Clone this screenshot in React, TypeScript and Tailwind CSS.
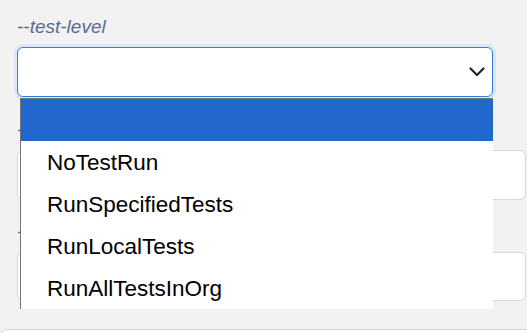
import React from 'react'

const options = ['', 'NoTestRun', 'RunSpecifiedTests', 'RunLocalTests', 'RunAllTestsInOrg']

/**
 * Campo select aberto com a lista de opções por cima dos outros campos
 */
const Chevron: React.FC = () => (
  <svg width="16" height="10" viewBox="0 0 16 10" fill="none">
    <path d="M1.5 1.5 L8 8 L14.5 1.5" stroke="#222" strokeWidth="2.2" strokeLinecap="round" strokeLinejoin="round" />
  </svg>
)

const Field: React.FC<{ label: string; className?: string; inputClass?: string }> = ({ label, className, inputClass }) => (
  <div className={className}>
    <p className="h-[22px] text-[19px] leading-[22px] italic text-[#5b6b8f]">{label}</p>
    <div className={`mt-[9px] w-[509px] rounded-[6px] border border-[#d6d6e2] bg-white ${inputClass}`} />
  </div>
)

export default function App() {
  return (
    <div className="relative h-[333px] w-[527px] overflow-hidden bg-[#f2f2f2] font-['Liberation_Sans',Arial,sans-serif]">
      <div className="flex flex-col pl-[17px] pt-[16px]">
        {/* --test-level */}
        <div>
          <p className="h-[22px] text-[19px] leading-[22px] italic text-[#5b6b8f]">--test-level</p>
          <div className="mt-[9px] flex h-[50px] w-[476px] items-center justify-end rounded-[6px] border border-[#2f80dd] bg-white pr-[7px] shadow-[0_0_0_3px_#dde7f3]">
            <Chevron />
          </div>
        </div>

        {/* Campos escondidos atrás da lista */}
        <Field label="--tests" className="mt-[22px]" inputClass="h-[50px]" />
        <Field label="--wait" className="mt-[21px]" inputClass="h-[49px]" />
      </div>

      {/* Painel de baixo */}
      <div className="ml-[1px] mt-[28px] h-[40px] w-[540px] rounded-[6px] border border-[#d6d6e2] bg-white" />

      {/* Lista de opções aberta */}
      <ul className="absolute left-[20px] top-[98px] w-[473px] border-l border-t border-[#767676] bg-white text-[22.5px] text-black">
        {options.map((opt, i) => (
          <li
            key={opt || 'empty'}
            className={`h-[42px] pl-[26px] pt-[2px] leading-[40px] ${i === 0 ? 'bg-[#2167cc] text-white' : ''}`}
          >
            {opt}
          </li>
        ))}
      </ul>
    </div>
  )
}
